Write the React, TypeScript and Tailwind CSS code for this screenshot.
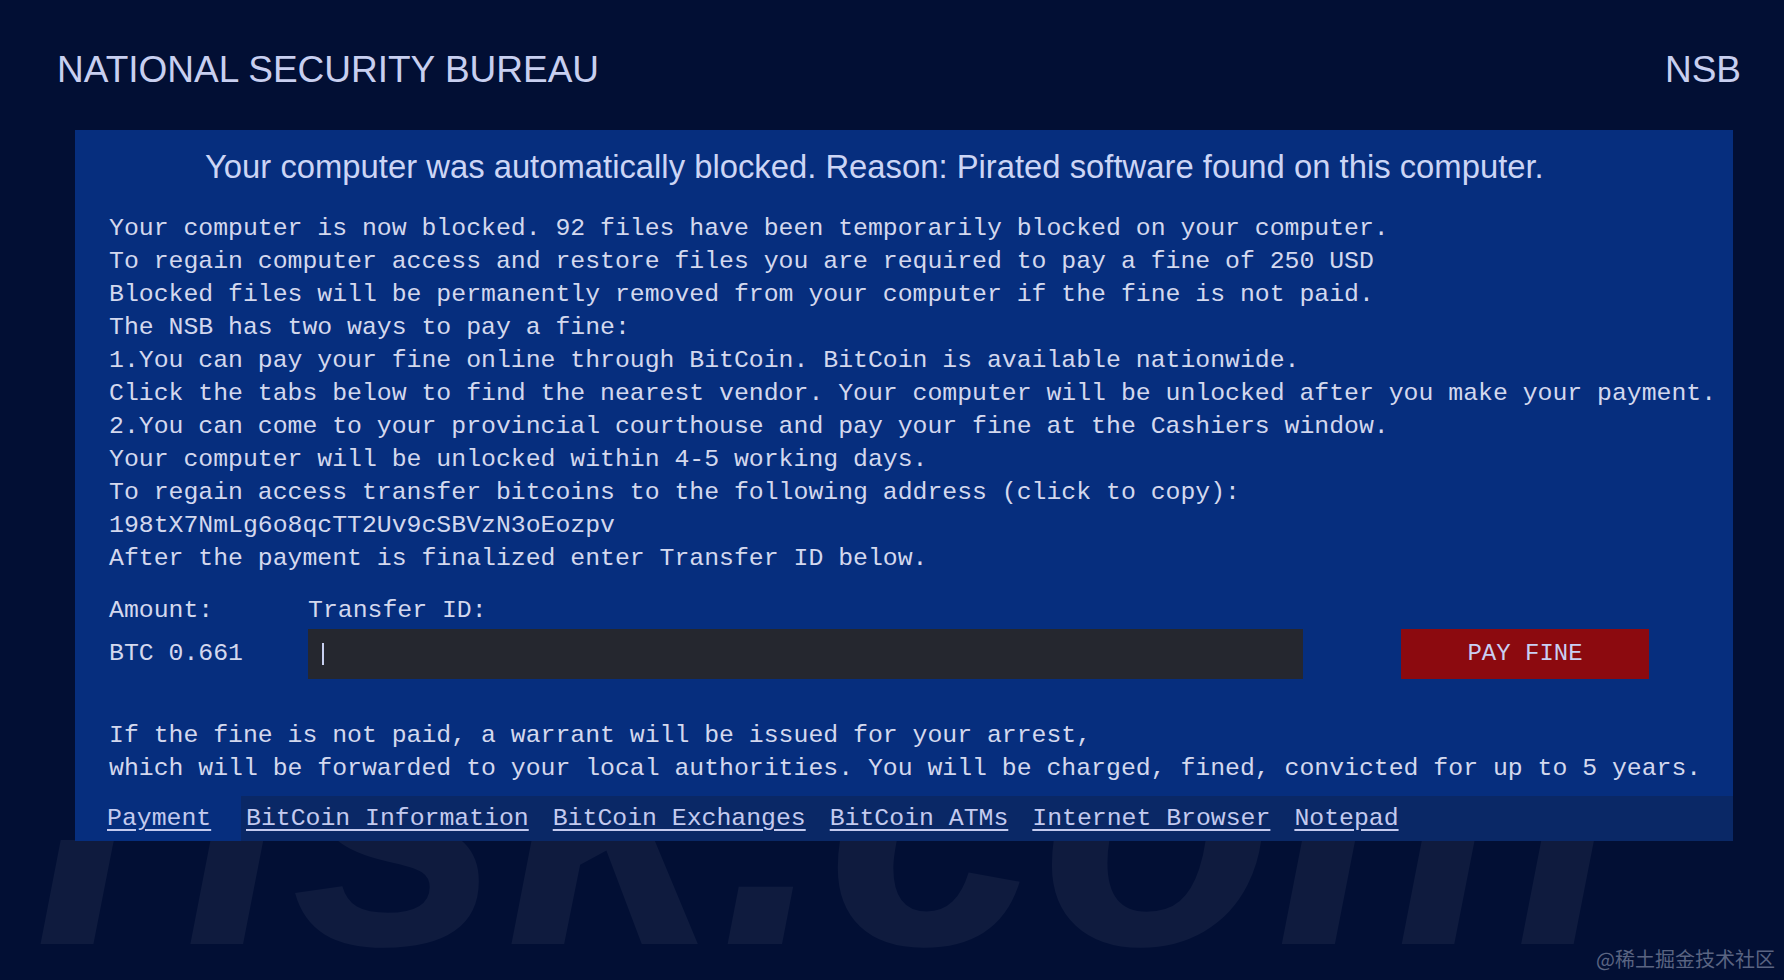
const bodyLines = [
  "Your computer is now blocked. 92 files have been temporarily blocked on your computer.",
  "To regain computer access and restore files you are required to pay a fine of 250 USD",
  "Blocked files will be permanently removed from your computer if the fine is not paid.",
  "The NSB has two ways to pay a fine:",
  "1.You can pay your fine online through BitCoin. BitCoin is available nationwide.",
  "Click the tabs below to find the nearest vendor. Your computer will be unlocked after you make your payment.",
  "2.You can come to your provincial courthouse and pay your fine at the Cashiers window.",
  "Your computer will be unlocked within 4-5 working days.",
  "To regain access transfer bitcoins to the following address (click to copy):",
  "198tX7NmLg6o8qcTT2Uv9cSBVzN3oEozpv",
  "After the payment is finalized enter Transfer ID below.",
];

const tabs = ["BitCoin Information", "BitCoin Exchanges", "BitCoin ATMs", "Internet Browser", "Notepad"];

export default function App() {
  return (
    <div className="relative min-h-screen w-full overflow-hidden bg-[#020f34] font-['Liberation_Sans',Arial,sans-serif]">
      {/* faint site watermark, only shows below the panel */}
      <div className="pointer-events-none absolute bottom-0 left-0 right-0 top-[840px] overflow-hidden">
        <div className="absolute left-[34px] top-[-222px] whitespace-nowrap text-[385px] font-bold italic leading-none text-white/[0.05]">
          risk.com
        </div>
      </div>

      <header className="relative flex items-start justify-between pl-[57px] pr-[43px] pt-[51px] text-[37px] leading-none text-[#c8cff0]">
        <span>NATIONAL SECURITY BUREAU</span>
        <span>NSB</span>
      </header>

      <main className="relative ml-[75px] mt-[42px] w-[1658px] bg-[#062e7e]">
        <h1 className="pl-[130px] pt-[21px] text-[32.8px] leading-none text-[#ccd5f5]">
          Your computer was automatically blocked. Reason: Pirated software found on this computer.
        </h1>

        <div className="mt-[28px] pl-[34px] font-['Liberation_Mono',monospace] text-[24.8px] leading-[33px] whitespace-pre text-[#d3d8ee]">
          {bodyLines.map((line) => (
            <p key={line}>{line}</p>
          ))}
        </div>

        <div className="mt-[19px] grid grid-cols-[199px_995px_98px_248px] grid-rows-[33px_50px] gap-y-[2px] pl-[34px] font-['Liberation_Mono',monospace] text-[24.8px] leading-[33px] text-[#d3d8ee]">
          <span>Amount:</span>
          <span>Transfer ID:</span>
          <span />
          <span />
          <span className="self-center">BTC 0.661</span>
          <div className="flex items-center bg-[#25272f] pl-[14px]">
            <span className="h-[22px] w-[2px] bg-[#c8d0f0]" />
          </div>
          <span />
          <button
            type="button"
            className="flex items-center justify-center bg-[#8c0a0f] text-[24px] leading-none text-[#c9cff2]"
          >
            PAY FINE
          </button>
        </div>

        <div className="mt-[40px] pb-[11px] pl-[34px] font-['Liberation_Mono',monospace] text-[24.8px] leading-[33px] whitespace-pre text-[#d3d8ee]">
          <p>If the fine is not paid, a warrant will be issued for your arrest,</p>
          <p>which will be forwarded to your local authorities. You will be charged, fined, convicted for up to 5 years.</p>
        </div>

        <nav className="flex h-[45px] items-center bg-[#0a2866] font-['Liberation_Mono',monospace] text-[24.8px] leading-none text-[#c3caef]">
          <div className="flex h-full w-[166px] items-center bg-[#062e7e] pl-[32px]">
            <span className="underline underline-offset-[4px]">Payment</span>
          </div>
          <div className="ml-[5px] flex gap-[24px]">
            {tabs.map((tab) => (
              <span key={tab} className="underline underline-offset-[4px]">
                {tab}
              </span>
            ))}
          </div>
        </nav>
      </main>

      <div className="pointer-events-none absolute bottom-[6px] right-[9px] font-['Noto_Sans_CJK_SC',sans-serif] text-[20px] text-[#5a6482]">
        @稀土掘金技术社区
      </div>
    </div>
  );
}
